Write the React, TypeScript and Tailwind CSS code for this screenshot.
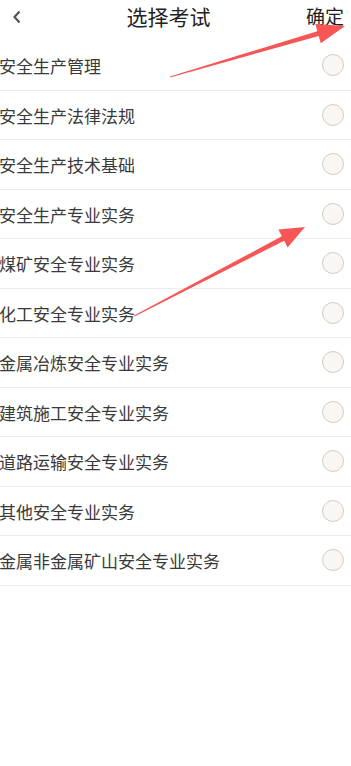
const EXAMS = [
  "安全生产管理",
  "安全生产法律法规",
  "安全生产技术基础",
  "安全生产专业实务",
  "煤矿安全专业实务",
  "化工安全专业实务",
  "金属冶炼安全专业实务",
  "建筑施工安全专业实务",
  "道路运输安全专业实务",
  "其他安全专业实务",
  "金属非金属矿山安全专业实务",
];

export default function App() {
  return (
    <div
      className="relative w-[351px] h-[766px] bg-white overflow-hidden text-[#333]"
      style={{ fontFamily: '"Noto Sans CJK SC", "Noto Sans", sans-serif' }}
    >
      {/* Header */}
      <div className="relative flex items-center h-[41px] pb-2">
        <svg className="absolute left-[12px] top-[10px]" width="10" height="14" viewBox="0 0 10 14">
          <path d="M7.5 1.5 L2.5 7 L7.5 12.5" fill="none" stroke="#555" strokeWidth="2.2" />
        </svg>
        <div className="flex-1 text-center text-[21px] leading-none pr-[14px] text-[#222]">选择考试</div>
        <div className="absolute right-[7px] top-[6px] text-[19px] leading-none text-[#222]">确定</div>
      </div>

      {/* List */}
      <div className="flex flex-col">
        {EXAMS.map((name) => (
          <div
            key={name}
            className="flex items-center justify-between h-[49.5px] border-b border-[#ececec] pr-[7px]"
          >
            <span className="text-[17px] leading-none -ml-[1px] pt-[1px] text-[#3a3a3a]">{name}</span>
            <span className="w-[22px] h-[22px] rounded-full border border-[#d3ccc5] bg-[#f9f6f3]" />
          </div>
        ))}
      </div>

      {/* Annotation arrows */}
      <svg className="absolute inset-0 pointer-events-none" width="351" height="766" viewBox="0 0 351 766">
        <polygon
          points="170,76.5 317.3,31.3 315.3,24.1 345,26 320.8,43.3 318.7,36.1 170,77.5"
          fill="#f65656"
        />
        <polygon
          points="134,315.5 281.8,236.3 278.4,229.6 305,227 287.6,247.4 284.2,240.7 134.5,316.5"
          fill="#f65656"
        />
      </svg>
    </div>
  );
}
